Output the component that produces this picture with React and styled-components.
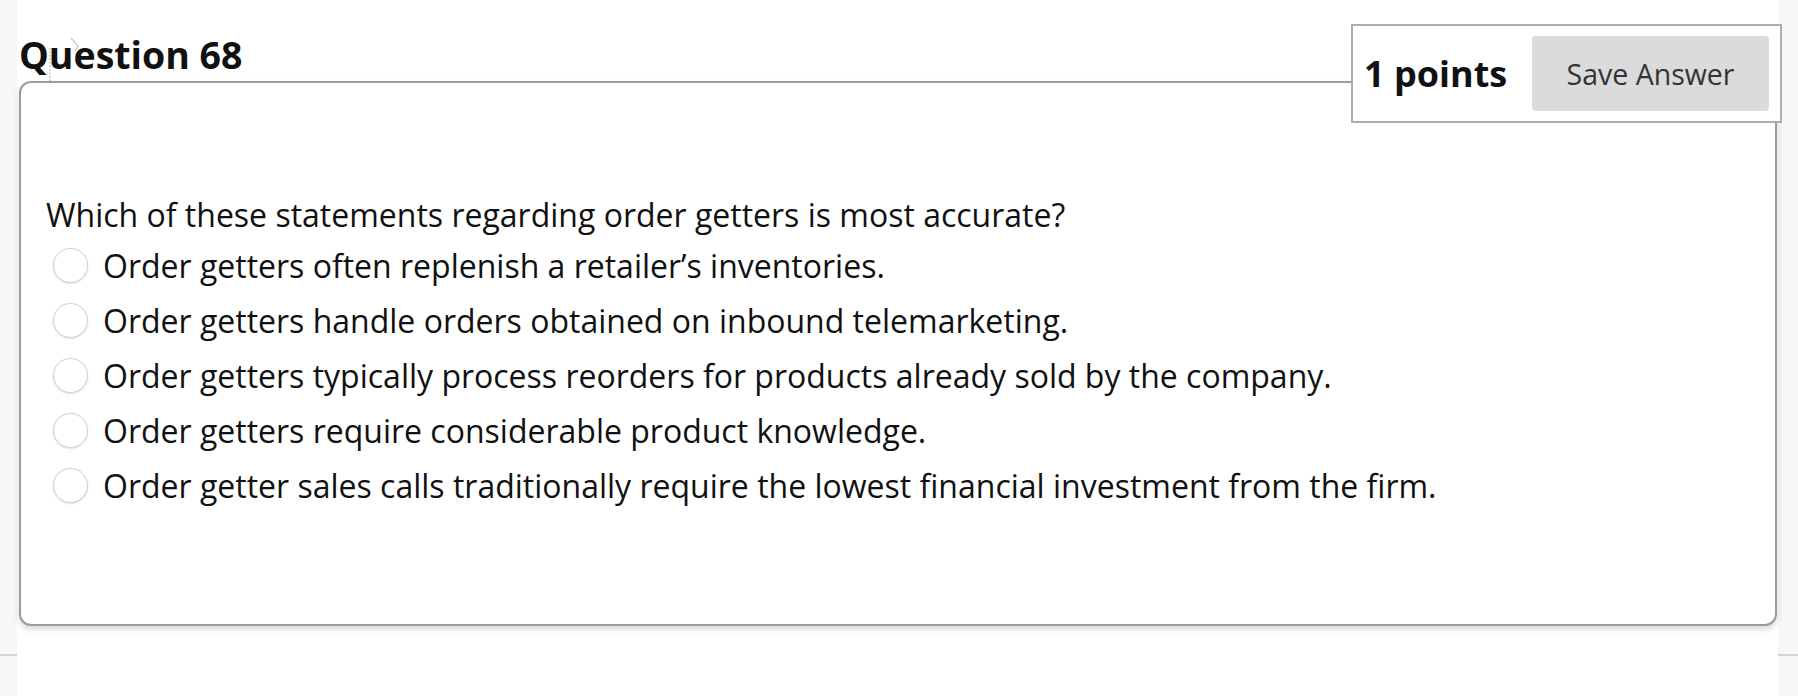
import React from 'react'
import styled, { createGlobalStyle } from 'styled-components'

const GlobalStyle = createGlobalStyle`
  html, body {
    margin: 0;
    padding: 0;
    background: #f7f7f7;
  }
  body {
    font-family: "Open Sans", "Noto Sans", "Liberation Sans", sans-serif;
    color: #111;
  }
  * {
    box-sizing: border-box;
  }
`;

const options = [
  'Order getters often replenish a retailer’s inventories.',
  'Order getters handle orders obtained on inbound telemarketing.',
  'Order getters typically process reorders for products already sold by the company.',
  'Order getters require considerable product knowledge.',
  'Order getter sales calls traditionally require the lowest financial investment from the firm.',
];

const App = () => {
  return (
    <>
      <GlobalStyle />
      <Page>
        <Gutter width={17}>
          <GutterTop />
        </Gutter>
        <Main>
          <Heading>Question 68</Heading>
          <HandleMark width="40" height="50" viewBox="0 0 40 50">
            <line x1="5" y1="12" x2="5" y2="46" stroke="#a9a9a9" strokeWidth="1.2" strokeDasharray="1.5 2" />
            <polyline points="26,2 33,10 30,15" fill="none" stroke="#c4c4c4" strokeWidth="1.2" />
          </HandleMark>
          <PointsBox>
            <Points>1 points</Points>
            <SaveButton type="button">Save Answer</SaveButton>
          </PointsBox>
          <Card>
            <Prompt>Which of these statements regarding order getters is most accurate?</Prompt>
            <OptionList>
              {options.map((text) => (
                <Option key={text}>
                  <Radio />
                  <OptionText>{text}</OptionText>
                </Option>
              ))}
            </OptionList>
          </Card>
        </Main>
        <Gutter width={20}>
          <GutterTop />
        </Gutter>
      </Page>
    </>
  )
}

export default App

const Page = styled.div`
  display: flex;
  min-height: 696px;
`;

const Gutter = styled.div`
  width: ${props => props.width}px;
  flex: none;
  background: #f7f7f7;
`;

const GutterTop = styled.div`
  height: 656px;
  border-bottom: 2px solid #d4d4d4;
`;

const Main = styled.div`
  position: relative;
  flex: 1;
  background: #fff;
  padding: 29px 1px 0 2px;
`;

const Heading = styled.h2`
  margin: 0 0 1px 0;
  font-size: 37.5px;
  line-height: 51px;
  font-weight: 700;
  color: #111;
`;

const HandleMark = styled.svg`
  position: absolute;
  left: 28px;
  top: 36px;
`;

const PointsBox = styled.div`
  position: absolute;
  top: 24px;
  right: -4px;
  width: 431px;
  height: 99px;
  display: flex;
  align-items: center;
  justify-content: space-between;
  padding: 0 11px;
  background: #fff;
  border: 2px solid #adadad;
`;

const Points = styled.span`
  font-size: 36px;
  font-weight: 700;
  color: #111;
`;

const SaveButton = styled.button`
  width: 237px;
  height: 75px;
  border: none;
  border-radius: 4px;
  background: #dbdbdb;
  color: #333;
  font-family: "Open Sans", "Noto Sans", sans-serif;
  font-size: 28.5px;
  padding: 0;
`;

const Card = styled.div`
  border: 2px solid #9c9c9c;
  border-radius: 12px;
  background: #fff;
  box-shadow: 0 3px 6px rgba(0, 0, 0, 0.16);
  padding: 110px 24px 111px 25px;
`;

const Prompt = styled.p`
  margin: 0 0 1px;
  font-size: 32px;
  line-height: 44px;
`;

const OptionList = styled.div`
  display: flex;
  flex-direction: column;
  padding-left: 7px;
`;

const Option = styled.label`
  display: flex;
  align-items: center;
  gap: 15px;
  height: 55px;
`;

const Radio = styled.span`
  width: 35px;
  height: 35px;
  flex: none;
  border-radius: 50%;
  border: 1px solid #cfcfcf;
  background: #fff;
  box-shadow: 0 1px 2px rgba(0, 0, 0, 0.12);
`;

const OptionText = styled.span`
  font-size: 32px;
  line-height: 44px;
  color: #111;
`;
